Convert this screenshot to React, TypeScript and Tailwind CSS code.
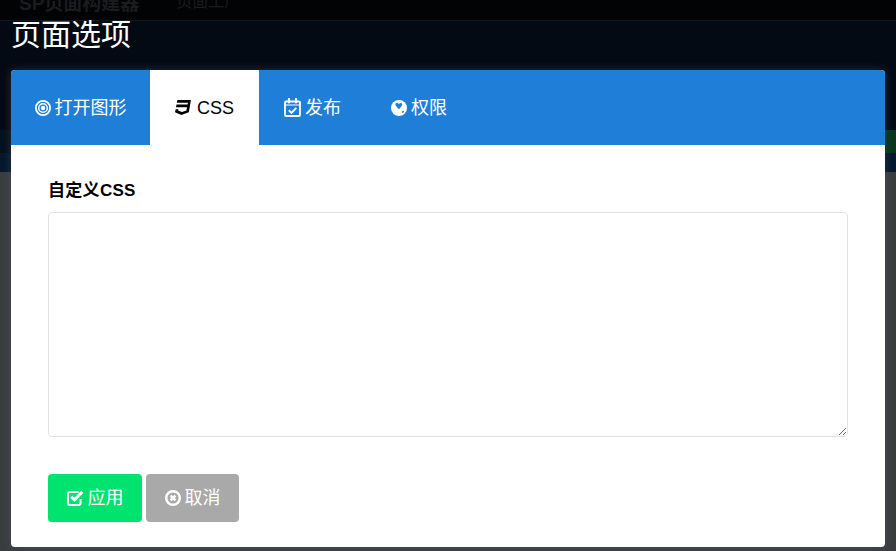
import { FaCss3 } from "react-icons/fa";

const font = "font-['Liberation_Sans','Noto_Sans_CJK_SC',sans-serif]";

const BullseyeIcon = () => (
  <svg viewBox="0 0 16 16" className="h-4 w-4" fill="none" stroke="currentColor">
    <circle cx="8" cy="8" r="7.1" strokeWidth="1.8" />
    <circle cx="8" cy="8" r="4.3" strokeWidth="1.5" />
    <circle cx="8" cy="8" r="2.2" fill="currentColor" strokeWidth="0" />
  </svg>
);

const CalendarIcon = () => (
  <svg viewBox="0 0 17 19" className="h-[19px] w-[17px]" fill="none" stroke="currentColor">
    <rect x="1" y="3.5" width="15" height="14.5" rx="1" strokeWidth="1.8" />
    <path d="M1 7h15" strokeWidth="1.2" />
    <path d="M5 0.8v3.6M12 0.8v3.6" strokeWidth="2.2" strokeLinecap="round" />
    <path d="M4.8 12.2l2.7 2.6 4.8-5" strokeWidth="1.9" />
  </svg>
);

const GlobeIcon = () => (
  <svg viewBox="0 0 16 16" className="h-4 w-4">
    <circle cx="8" cy="8" r="8" fill="currentColor" />
    <path d="M4.6 3.6c1.4-.9 2.6-.5 3.3.3.9-1 2.6-1.3 3.2-.1.5 1-.5 2.8-3 5.4C6.2 7.6 3.6 5.2 4.6 3.6z" fill="#1f7ed8" />
    <path d="M10.8 11.6l1.8-.8.6.8-1.4 1.4-1.2-.4z" fill="#1f7ed8" />
  </svg>
);

const CheckSquareIcon = () => (
  <svg viewBox="0 0 17 16" className="h-4 w-[17px]" fill="none" stroke="currentColor">
    <path d="M13.6 9v4a2 2 0 0 1-2 2H3a2 2 0 0 1-2-2V4a2 2 0 0 1 2-2h8.5" strokeWidth="2" />
    <path d="M4.2 6.6l3.3 3.3 7.8-8" strokeWidth="3" />
  </svg>
);

const CancelIcon = () => (
  <svg viewBox="0 0 16 16" className="h-4 w-4" fill="none" stroke="currentColor">
    <circle cx="8" cy="8" r="6.8" strokeWidth="2.4" />
    <path d="M5.6 5.6l4.8 4.8M10.4 5.6l-4.8 4.8" strokeWidth="2.6" />
  </svg>
);

const App = () => {
  return (
    <div className={`relative h-[551px] w-[896px] overflow-hidden bg-[#3a3d40] ${font}`}>
      {/* page behind the overlay */}
      <div className="flex h-[21px] items-start gap-[37px] overflow-hidden border-b border-[#14171b] bg-[#020305] pl-[19px] text-[#1a1c1f]">
        <span className="-mt-[6px] text-[19px] font-bold leading-[20px]">SP页面构建器</span>
        <span className="-mt-[8px] text-base leading-[20px]">页面工厂</span>
      </div>
      <div className="h-[109px] bg-[#040a14]" />
      <div className="h-[23px] bg-[linear-gradient(90deg,#04111f_0%,#04111f_90%,#0a361c_100%)]" />
      <div className="h-[19px] bg-[#06182c]" />

      {/* dialog */}
      <div className="absolute inset-x-[11px] top-0 h-[547px]">
        <h2 className="h-[70px] pt-[16px] text-[30px] font-normal leading-[38px] text-white">页面选项</h2>
        <div className="flex h-[477px] flex-col overflow-hidden rounded-[4px] bg-white shadow-[0_0_10px_rgba(90,110,130,0.35)]">
          <div className="flex h-[75px] bg-[#1f7ed8] text-lg text-white">
            <div className="flex w-[139px] items-center justify-center gap-[4px]">
              <BullseyeIcon />
              <span>打开图形</span>
            </div>
            <div className="flex w-[109px] items-center justify-center gap-[5px] bg-white text-black">
              <FaCss3 className="h-[17px] w-[17px]" />
              <span>CSS</span>
            </div>
            <div className="flex w-[107px] items-center justify-center gap-[4px]">
              <CalendarIcon />
              <span>发布</span>
            </div>
            <div className="flex w-[106px] items-center justify-center gap-[4px]">
              <GlobeIcon />
              <span>权限</span>
            </div>
          </div>
          <div className="flex flex-1 flex-col px-[37px] pt-[35px]">
            <label className="translate-y-[1px] text-[17px] font-bold leading-[20px] tracking-[0.3px] text-black">自定义CSS</label>
            <textarea className="mt-[12px] h-[225px] w-[800px] rounded-[4px] border border-[#e3e3e3] bg-white outline-none" />
            <div className="mt-[37px] flex gap-[4px]">
              <button className="flex h-[48px] w-[94px] items-center justify-center gap-[4px] rounded-[4px] bg-[#00e36f] text-lg text-white">
                <CheckSquareIcon />
                <span>应用</span>
              </button>
              <button className="flex h-[48px] w-[93px] items-center justify-center gap-[4px] rounded-[4px] bg-[#a9a9a9] text-lg text-white">
                <CancelIcon />
                <span>取消</span>
              </button>
            </div>
          </div>
        </div>
      </div>
    </div>
  );
};

export default App;
